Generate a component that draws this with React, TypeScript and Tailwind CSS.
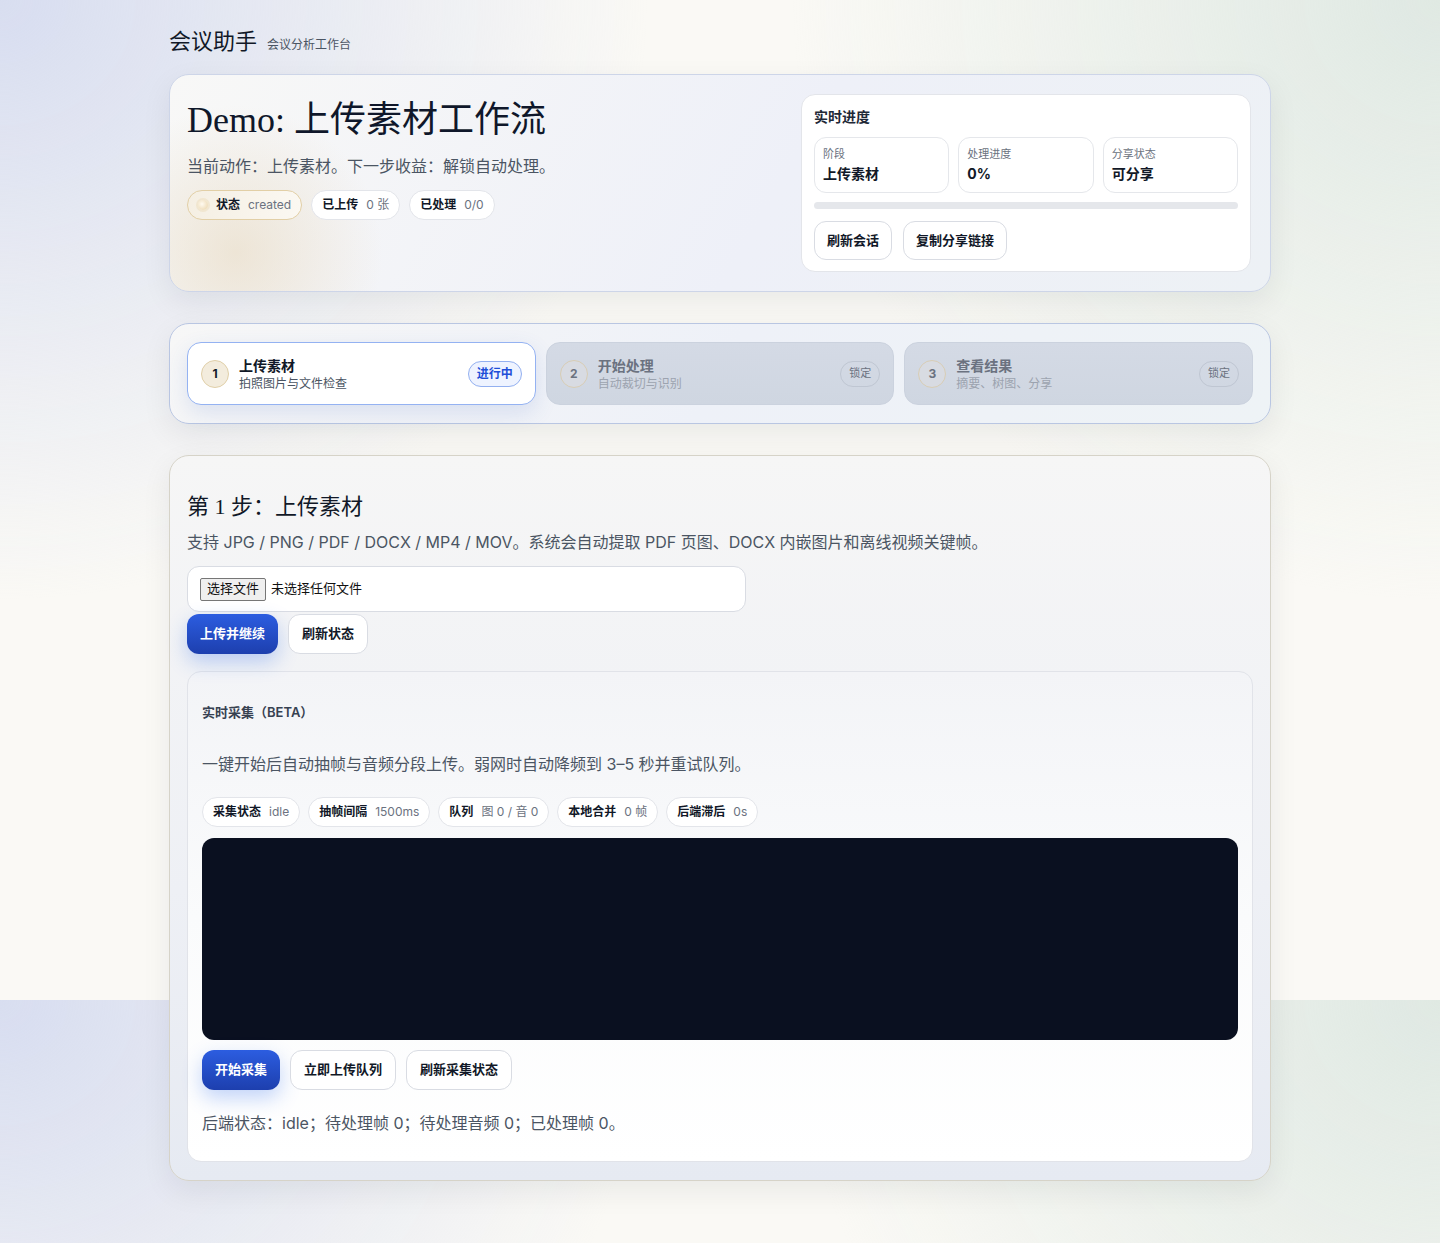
import React from "react";

const sans = "font-['Inter','Noto_Sans_CJK_SC',sans-serif]";
const serif = "font-['Liberation_Serif','Noto_Sans_CJK_SC',serif]";

function Pill({ label, value, warm }: { label: string; value: string; warm?: boolean }) {
  return (
    <div
      className={
        "flex h-[30px] items-center gap-2 rounded-full border px-[10px] text-[12px] " +
        (warm
          ? "border-[#e2cfa6] bg-[linear-gradient(90deg,#f5efe3,#fbf8f2)]"
          : "border-[#e3e5ea] bg-white")
      }
    >
      {warm && (
        <span className="h-[10px] w-[10px] rounded-full bg-[radial-gradient(circle_at_40%_40%,#fffaf0,#e9d3a8)] shadow-[0_0_0_2px_rgba(233,211,168,0.35)]" />
      )}
      <span className="font-bold text-[#111827]">{label}</span>
      <span className="text-[#6b7280]">{value}</span>
    </div>
  );
}

function Btn({ children, primary }: { children: React.ReactNode; primary?: boolean }) {
  return (
    <button
      className={
        "flex h-[40px] items-center rounded-[12px] px-[13px] text-[13px] font-bold " +
        (primary
          ? "bg-[linear-gradient(180deg,#2c5de0,#1d3fae)] text-white shadow-[0_8px_20px_rgba(37,99,235,0.28)]"
          : "border border-[#d9dce3] bg-white text-[#111827]")
      }
    >
      {children}
    </button>
  );
}

function Stat({ label, value }: { label: string; value: string }) {
  return (
    <div className="rounded-[12px] border border-[#e5e7eb] bg-white px-[8px] py-[8px]">
      <div className="text-[11px] leading-[16px] text-[#6b7280]">{label}</div>
      <div className="mt-[2px] text-[14px] font-bold leading-[20px] text-[#111827]">{value}</div>
    </div>
  );
}

function Step({
  n,
  title,
  sub,
  badge,
  active,
}: {
  n: string;
  title: string;
  sub: string;
  badge: string;
  active?: boolean;
}) {
  return (
    <div
      className={
        "flex h-[63px] items-center gap-[10px] rounded-[14px] border px-[13px] " +
        (active
          ? "border-[#94b2f2] bg-white shadow-[0_8px_22px_rgba(59,100,200,0.14)]"
          : "border-[#cbd2de] bg-[linear-gradient(180deg,#d4dae5,#cfd6e1)]")
      }
    >
      <div
        className={
          "flex h-[28px] w-[28px] shrink-0 items-center justify-center rounded-full border text-[12px] font-bold " +
          (active
            ? "border-[#e0cfa8] bg-[#f3ecdd] text-[#111827]"
            : "border-[#d8cdb5] bg-[#d8dbe2] text-[#6b7280]")
        }
      >
        {n}
      </div>
      <div className="flex min-w-0 flex-1 flex-col">
        <div className={"text-[14px] font-bold leading-[19px] " + (active ? "text-[#111827]" : "text-[#6b7280]")}>
          {title}
        </div>
        <div className={"text-[12px] leading-[17px] " + (active ? "text-[#4b5563]" : "text-[#9ca3af]")}>{sub}</div>
      </div>
      <div
        className={
          "flex h-[26px] items-center rounded-full border px-[8px] " +
          (active
            ? "border-[#93b0f0] bg-[#eef3ff] text-[12px] font-bold text-[#1d4ed8]"
            : "border-[#bfc6d2] bg-transparent text-[11px] text-[#6b7280]")
        }
      >
        {badge}
      </div>
    </div>
  );
}

export default function App() {
  return (
    <div
      className={
        sans +
        " min-h-[1243px] bg-[#faf9f5] [background-image:radial-gradient(ellipse_45%_60%_at_0%_0%,rgba(214,220,240,0.95),rgba(214,220,240,0)_100%),radial-gradient(ellipse_45%_60%_at_100%_0%,rgba(222,232,226,0.95),rgba(222,232,226,0)_100%)] [background-size:100%_1000px] bg-repeat-y pt-[28px] pb-[63px]"
      }
    >
      <div className="mx-auto w-[1102px]">
        {/* Header */}
        <div className="flex items-end gap-[10px]">
          <div className={serif + " text-[22px] leading-[28px] text-[#111827]"}>会议助手</div>
          <div className="pb-[3px] text-[12px] leading-[16px] text-[#4b5563]">会议分析工作台</div>
        </div>

        {/* Card 1 */}
        <div className="mt-[18px] grid grid-cols-[1fr_450px] gap-[12px] rounded-[20px] border border-[#cdd5e8] bg-[radial-gradient(circle_at_6%_82%,rgba(226,205,168,0.42),rgba(226,205,168,0)_14%),linear-gradient(120deg,#f8f8f7,#eef0f8_55%,#edf1f5)] p-[19px] pl-[17px] shadow-[0_10px_30px_rgba(15,23,42,0.07)]">
          <div className="pt-[4px]">
            <h1 className={serif + " text-[36px] font-normal leading-[45px] text-[#0f172a]"}>Demo: 上传素材工作流</h1>
            <p className="mt-[11px] text-[16px] leading-[24px] text-[#4b5563]">当前动作：上传素材。下一步收益：解锁自动处理。</p>
            <div className="mt-[12px] flex gap-[9px]">
              <Pill label="状态" value="created" warm />
              <Pill label="已上传" value="0 张" />
              <Pill label="已处理" value="0/0" />
            </div>
          </div>
          <div className="rounded-[14px] border border-[#e3e5ea] bg-white p-[12px] pb-[11px]">
            <div className="text-[14px] font-semibold leading-[20px] text-[#1f2937]">实时进度</div>
            <div className="mt-[10px] grid grid-cols-3 gap-[9px]">
              <Stat label="阶段" value="上传素材" />
              <Stat label="处理进度" value="0%" />
              <Stat label="分享状态" value="可分享" />
            </div>
            <div className="mt-[9px] h-[7px] rounded-full bg-[#e5e7eb]" />
            <div className="mt-[12px] flex gap-[11px]">
              <button className="flex h-[39px] items-center rounded-[12px] border border-[#d9dce3] bg-white px-[12px] text-[13px] font-bold text-[#111827]">
                刷新会话
              </button>
              <button className="flex h-[39px] items-center rounded-[12px] border border-[#d9dce3] bg-white px-[12px] text-[13px] font-bold text-[#111827]">
                复制分享链接
              </button>
            </div>
          </div>
        </div>

        {/* Card 2: stepper */}
        <div className="mt-[31px] grid grid-cols-3 gap-[10px] rounded-[20px] border border-[#b9c6e2] bg-[linear-gradient(120deg,#f7f7f7,#eef1f8_50%,#eef3f6)] px-[17px] py-[18px] shadow-[0_10px_30px_rgba(15,23,42,0.07)]">
          <Step n="1" title="上传素材" sub="拍照图片与文件检查" badge="进行中" active />
          <Step n="2" title="开始处理" sub="自动裁切与识别" badge="锁定" />
          <Step n="3" title="查看结果" sub="摘要、树图、分享" badge="锁定" />
        </div>

        {/* Card 3 */}
        <div className="mt-[31px] rounded-[20px] border border-[#d6d3c8] bg-[linear-gradient(180deg,#f6f6f6,#eef0f5_60%,#e6eaf2)] px-[17px] pt-[35px] pb-[18px] shadow-[0_10px_30px_rgba(15,23,42,0.07)]">
          <h2 className={serif + " text-[22px] font-normal leading-[31px] text-[#111827]"}>第 1 步：上传素材</h2>
          <p className="mt-[8px] text-[16px] leading-[24px] text-[#4b5563]">
            支持 JPG / PNG / PDF / DOCX / MP4 / MOV。系统会自动提取 PDF 页图、DOCX 内嵌图片和离线视频关键帧。
          </p>
          <div className="mt-[12px] flex h-[46px] w-[559px] items-center gap-[5px] rounded-[12px] border border-[#d9dce3] bg-white px-[12px]">
            <span className="flex h-[23px] items-center rounded-[2px] border border-[#767676] bg-[#efefef] px-[6px] text-[13px] text-[#111]">
              选择文件
            </span>
            <span className="text-[13px] text-[#111]">未选择任何文件</span>
          </div>
          <div className="mt-[2px] flex gap-[10px]">
            <Btn primary>上传并继续</Btn>
            <Btn>刷新状态</Btn>
          </div>

          <div className="mt-[17px] rounded-[14px] border border-[#e1e3e9] bg-[linear-gradient(180deg,#f3f4f7,#fafbfc_50%,#ffffff)] px-[14px] pt-[30px] pb-[26px]">
            <div className="text-[13px] font-semibold leading-[20px] text-[#374151]">实时采集（BETA）</div>
            <p className="mt-[30px] text-[16px] leading-[24px] text-[#4b5563]">
              一键开始后自动抽帧与音频分段上传。弱网时自动降频到 3–5 秒并重试队列。
            </p>
            <div className="mt-[21px] flex gap-[8px]">
              <Pill label="采集状态" value="idle" />
              <Pill label="抽帧间隔" value="1500ms" />
              <Pill label="队列" value="图 0 / 音 0" />
              <Pill label="本地合并" value="0 帧" />
              <Pill label="后端滞后" value="0s" />
            </div>
            <div className="mt-[11px] h-[202px] rounded-[12px] bg-[#0a1020]" />
            <div className="mt-[10px] flex gap-[10px]">
              <Btn primary>开始采集</Btn>
              <Btn>立即上传队列</Btn>
              <Btn>刷新采集状态</Btn>
            </div>
            <p className="mt-[21px] text-[16px] leading-[24px] text-[#4b5563]">
              后端状态：idle；待处理帧 0；待处理音频 0；已处理帧 0。
            </p>
          </div>
        </div>
      </div>
    </div>
  );
}
